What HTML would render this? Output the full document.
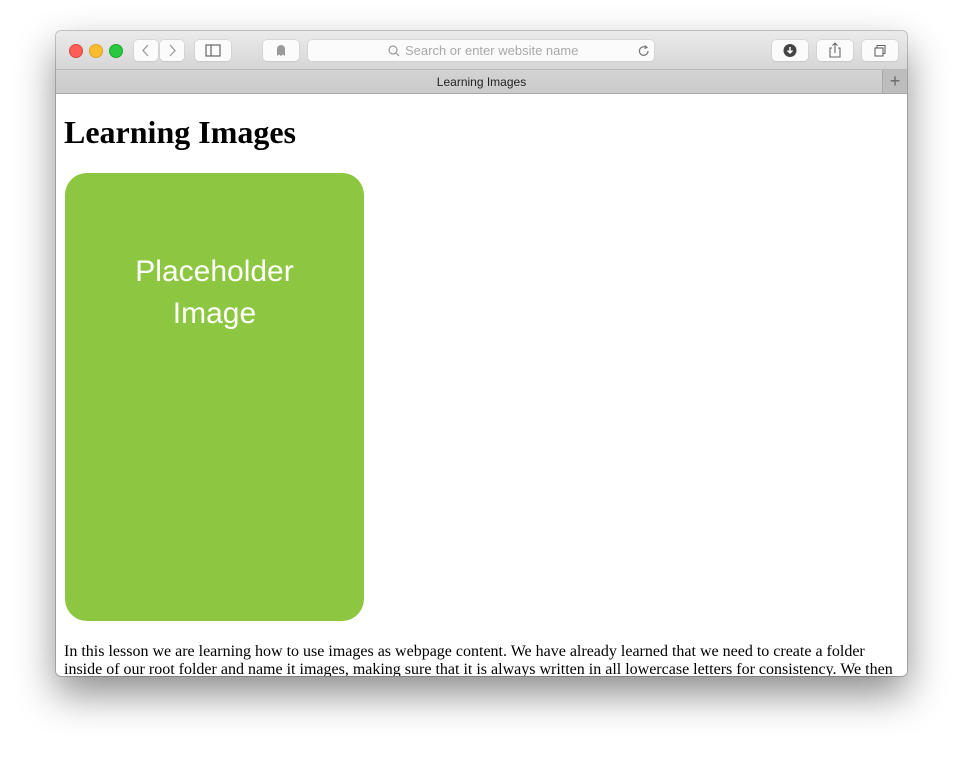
<!DOCTYPE html>
<html><head><meta charset="utf-8"><style>
html,body{margin:0;padding:0;width:963px;height:757px;background:#fff;overflow:hidden;position:relative}
.win{position:absolute;left:56px;top:31px;width:851px;height:645px;border-radius:5px;overflow:hidden;box-shadow:0 18px 40px rgba(0,0,0,.45),0 0 0 1px rgba(0,0,0,.2);background:#fff}
.tb{position:absolute;left:0;top:0;width:851px;height:38px;background:linear-gradient(#ebebeb,#d6d6d6);}
.tabbar{position:absolute;left:0;top:38px;width:851px;height:23px;background:linear-gradient(#d3d3d3,#cbcbcb);border-top:1px solid #b8b8b8;border-bottom:1px solid #a9a9a9;font:12px "Liberation Sans",sans-serif;color:#222;text-align:center;line-height:24px}
.plus{position:absolute;right:0;top:0;width:24px;height:23px;background:#bdbdbd;border-left:1px solid #a9a9a9;color:#666;font-size:18px;line-height:22px}
.dot{position:absolute;top:13px;width:12px;height:12px;border-radius:50%}
.btn{position:absolute;top:9px;height:21px;background:#fbfbfb;border-radius:4px;box-shadow:0 0 0 .5px #c8c8c8,0 1px 1px rgba(0,0,0,.08)}
.url{position:absolute;left:252px;top:9px;width:346px;height:21px;background:#fbfbfb;border-radius:4px;box-shadow:0 0 0 .5px #c8c8c8;font:13px "Liberation Sans",sans-serif;color:#a8a8a8;line-height:21px}
.content{position:absolute;left:0;top:62px;width:851px;height:583px;font-family:"Liberation Serif",serif}
h1{position:absolute;left:8px;top:21px;margin:0;font-size:32px;font-weight:bold}
.img{position:absolute;left:9px;top:80px;width:299px;height:448px;background:#8dc741;border-radius:22px;color:#fff;font:30px "Liberation Sans",sans-serif;text-align:center;line-height:42px}
p{position:absolute;left:8px;top:550px;margin:0;width:840px;font-size:16px;line-height:18px;color:#000}
</style></head><body>
<div class="win">
<div class="tb">
<div class="dot" style="left:13px;background:#fc5f57;border:.5px solid #e0443e"></div>
<div class="dot" style="left:33px;background:#fdbc2e;border:.5px solid #dea123"></div>
<div class="dot" style="left:53px;background:#28c840;border:.5px solid #1aab29"></div>
<div class="btn" style="left:78px;width:24px"><svg width="24" height="21"><path d="M14 5l-5 5.5 5 5.5" fill="none" stroke="#9a9a9a" stroke-width="1.3"/></svg></div>
<div class="btn" style="left:104px;width:24px"><svg width="24" height="21"><path d="M10 5l5 5.5-5 5.5" fill="none" stroke="#9a9a9a" stroke-width="1.3"/></svg></div>
<div class="btn" style="left:139px;width:36px"><svg width="36" height="21"><rect x="11" y="5" width="14" height="11" fill="none" stroke="#666" stroke-width="1.2"/><line x1="16" y1="5" x2="16" y2="16" stroke="#666" stroke-width="1.2"/></svg></div>
<div class="btn" style="left:207px;width:36px"><svg width="36" height="21"><path d="M14 16v-7a4 4 0 0 1 8 0v7l-2-1.5-2 1.5-2-1.5z" fill="#9a9a9a"/></svg></div>
<div class="url"><svg width="12" height="12" style="position:absolute;left:80px;top:5px"><circle cx="5" cy="5" r="4" fill="none" stroke="#999" stroke-width="1.2"/><line x1="8" y1="8" x2="11" y2="11" stroke="#999" stroke-width="1.2"/></svg><span style="position:absolute;left:97px">Search or enter website name</span><svg width="14" height="14" style="position:absolute;left:329px;top:4px"><path d="M11 7a4.3 4.3 0 1 1-2-3.6" fill="none" stroke="#777" stroke-width="1.2"/><path d="M8 1.5l2 2-2.5 1" fill="none" stroke="#777" stroke-width="1.2"/></svg></div>
<div class="btn" style="left:716px;width:36px"><svg width="36" height="21"><circle cx="18" cy="10.5" r="6.5" fill="#444"/><path d="M18 7v6M15.5 10.5l2.5 2.5 2.5-2.5" stroke="#fff" stroke-width="1.5" fill="none"/></svg></div>
<div class="btn" style="left:761px;width:36px"><svg width="36" height="21"><path d="M15 8h-2v9h10v-9h-2M18 13V3M15.5 5.5L18 3l2.5 2.5" fill="none" stroke="#666" stroke-width="1.1"/></svg></div>
<div class="btn" style="left:806px;width:36px"><svg width="36" height="21"><rect x="13" y="8" width="8" height="8" fill="none" stroke="#666" stroke-width="1.1"/><path d="M15 8V5.5h8v8h-2" fill="none" stroke="#666" stroke-width="1.1"/></svg></div>
</div>
<div class="tabbar">Learning Images<div class="plus">+</div></div>
<div class="content">
<h1>Learning Images</h1>
<div class="img"><div style="padding-top:78px">Placeholder<br>Image</div></div>
<p>In this lesson we are learning how to use images as webpage content. We have already learned that we need to create a folder inside of our root folder and name it images, making sure that it is always written in all lowercase letters for consistency. We then</p>
</div>
</div>
</body></html>
